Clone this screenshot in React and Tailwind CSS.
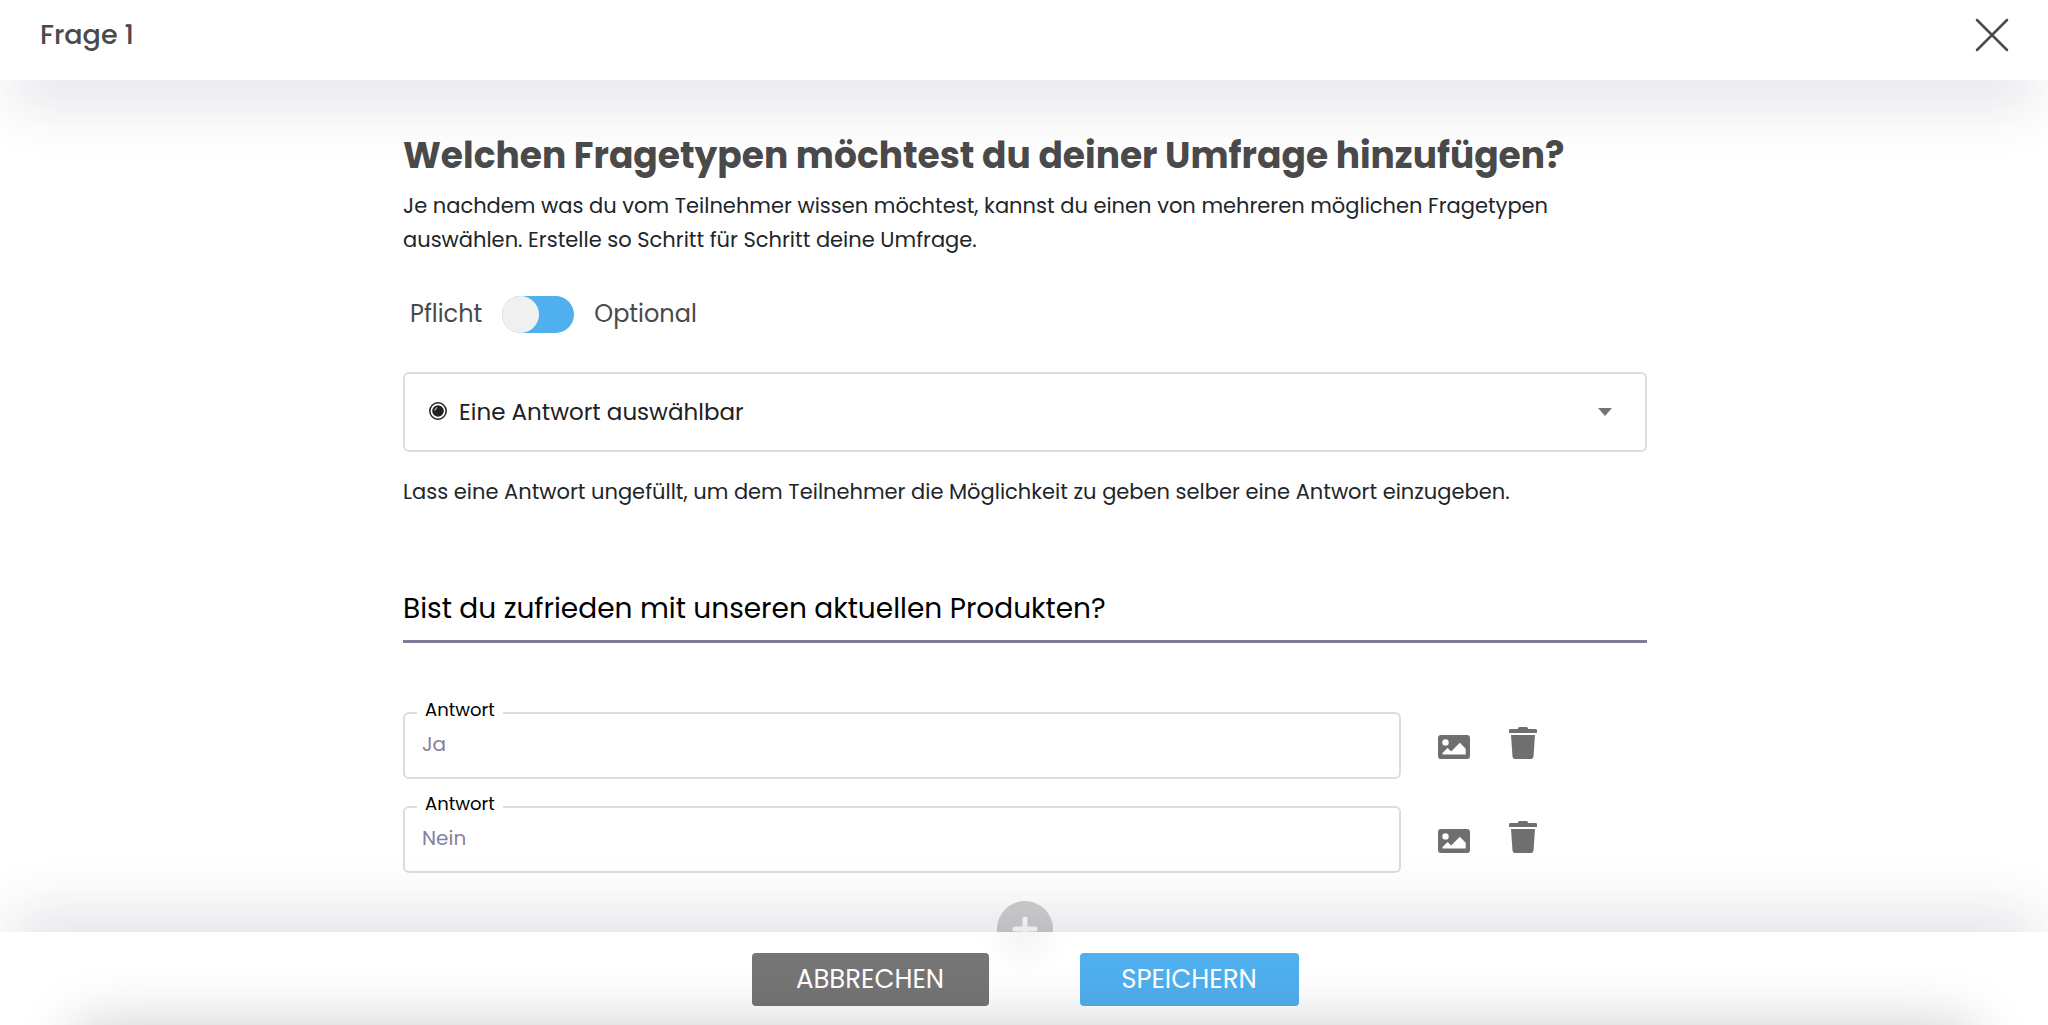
import React, { useState } from 'react';

const CloseIcon = () => (
  <svg width="34" height="34" viewBox="0 0 34 34" fill="none" stroke="#4a4a4a" strokeWidth="2.5" strokeLinecap="round">
    <path d="M2 2l30 30M32 2L2 32" />
  </svg>
);

const RadioIcon = () => (
  <svg width="18" height="20" viewBox="0 0 18 20" fill="none">
    <circle cx="9" cy="9" r="8.2" stroke="#222" strokeWidth="1.5" />
    <circle cx="9" cy="9" r="5.8" fill="#222" />
    <path d="M5.8 8a3.500 3.500 0 0 1 2-2.300" stroke="#fff" strokeWidth="1" strokeLinecap="round" />
  </svg>
);

const ImageIcon = () => (
  <svg width="34" height="26" viewBox="0 0 34 26" fill="#6f6f6f">
    <path
      fillRule="evenodd"
      d="M4 1h26a3 3 0 0 1 3 3v18a3 3 0 0 1-3 3H4a3 3 0 0 1-3-3V4a3 3 0 0 1 3-3zM8.500 5.200a3.200 3.200 0 1 0 0 6.400a3.200 3.200 0 0 0 0-6.400zM5.500 20.500h23.200v-5.800L22.800 8.800l-8.600 8.600l-3.600-3.400l-5.100 5z"
    />
  </svg>
);

const TrashIcon = () => (
  <svg width="28" height="32" viewBox="0 0 28 32" fill="#6f6f6f">
    <path d="M9 1.200Q9.300 0 11 0h6q1.700 0 2 1.200V2h7.500q1.500 0 1.500 1.300V6H0V3.300Q0 2 1.500 2H9z" />
    <path d="M2 8h24l-1.500 21.500Q24.300 32 22 32H6q-2.300 0-2.500-2.500z" />
  </svg>
);

const PlusIcon = () => (
  <svg width="26" height="26" viewBox="0 0 26 26" stroke="#fff" strokeWidth="5" strokeLinecap="round">
    <path d="M13 3v20M3 13h20" />
  </svg>
);

const Answer = ({ id, value, onChange }) => (
  <div className="flex items-center pr-[110px]">
    <div className="relative flex-1">
      <label htmlFor={id} className="absolute -top-[14px] left-[14px] bg-white px-2 text-[18px] leading-6 text-black">Antwort</label>
      <input
        id={id}
        value={value}
        onChange={onChange}
        className="block h-[67px] w-full rounded-md border-2 border-[#dcdcdc] bg-transparent px-[17px] pb-1 text-[20px] text-[#8580a0] outline-none"
      />
    </div>
    <button aria-label="Bild hinzufügen" className="ml-9 pt-[2px]"><ImageIcon /></button>
    <button aria-label="Antwort löschen" className="ml-[38px] pb-[6px]"><TrashIcon /></button>
  </div>
);

const App = () => {
  const [optional, setOptional] = useState(false);
  const [question, setQuestion] = useState('Bist du zufrieden mit unseren aktuellen Produkten?');
  const [answers, setAnswers] = useState(['Ja', 'Nein']);

  return (
    <div className="flex h-screen flex-col overflow-hidden bg-white font-['Poppins','Inter',sans-serif] text-[#212529]">
      <header className="relative z-10 flex h-20 shrink-0 items-start justify-between bg-white px-10 pt-[18px] shadow-[0_35px_60px_-12px_rgba(50,50,93,0.14)]">
        <h2 className="text-[27px] leading-[34px] font-medium text-[#4a4a4a]">Frage 1</h2>
        <button aria-label="Schließen" className="-mr-px"><CloseIcon /></button>
      </header>

      <main className="min-h-0 flex-1 overflow-hidden pr-6 pl-[26px]">
        <div className="mx-auto max-w-[1244px] pt-[51px]">
          <h1 className="text-[36px] leading-[50px] font-bold text-[#4a4a4a]">Welchen Fragetypen möchtest du deiner Umfrage hinzufügen?</h1>
          <p className="mt-2 max-w-[1190px] text-[21px] leading-[34px]">
            Je nachdem was du vom Teilnehmer wissen möchtest, kannst du einen von mehreren möglichen Fragetypen auswählen. Erstelle so Schritt für Schritt deine Umfrage.
          </p>

          <div className="mt-[38px] flex h-[38px] items-center gap-5 pl-[7px] text-[24px] text-[#4a4a4a]">
            <span>Pflicht</span>
            <label className="flex h-[37px] w-[72px] cursor-pointer rounded-full bg-[#50afee] has-checked:justify-end">
              <input
                type="checkbox"
                aria-label="Optional"
                checked={optional}
                onChange={(e) => setOptional(e.target.checked)}
                className="sr-only"
              />
              <span className="size-[37px] rounded-full bg-[#f0f0f0]" />
            </label>
            <span>Optional</span>
          </div>

          <div className="relative mt-[39px]">
            <select aria-label="Fragetyp" className="block h-20 w-full appearance-none rounded-md border-2 border-[#dadfe4] bg-white pr-16 pl-[54px] text-[23px] text-[#212121] outline-none">
              <option>Eine Antwort auswählbar</option>
            </select>
            <span className="pointer-events-none absolute inset-y-0 left-[26px] flex items-center"><RadioIcon /></span>
            <span className="pointer-events-none absolute inset-y-0 right-[35px] flex items-center">
              <svg width="14" height="8" viewBox="0 0 14 8" fill="#757575"><path d="M0 0h14L7 8z" /></svg>
            </span>
          </div>

          <p className="mt-[23px] text-[21px] leading-[34px]">Lass eine Antwort ungefüllt, um dem Teilnehmer die Möglichkeit zu geben selber eine Antwort einzugeben.</p>

          <input
            aria-label="Frage"
            value={question}
            onChange={(e) => setQuestion(e.target.value)}
            className="mt-[68px] block h-[66px] w-full border-b-3 border-[#7f7b98] text-[28px] text-black outline-none"
          />

          <div className="mt-[69px] flex flex-col gap-[27px]">
            {answers.map((a, i) => (
              <Answer
                key={i}
                id={`antwort-${i}`}
                value={a}
                onChange={(e) => setAnswers(answers.map((v, n) => (n === i ? e.target.value : v)))}
              />
            ))}
          </div>

          <button
            aria-label="Antwort hinzufügen"
            onClick={() => setAnswers([...answers, ''])}
            className="mx-auto mt-7 flex size-14 items-center justify-center rounded-full bg-[#cfcfcf]"
          >
            <PlusIcon />
          </button>
        </div>
      </main>

      <footer className="relative z-10 flex h-[93px] shrink-0 items-start justify-center gap-[91px] bg-white pt-[21px] pl-[2px] shadow-[0_-30px_60px_-12px_rgba(50,50,93,0.14)]">
        <div className="pointer-events-none absolute top-0 left-1/2 h-12 w-24 -translate-x-1/2 bg-[radial-gradient(circle_at_top,rgba(0,0,0,0.04),transparent_70%)]" />
        <button className="h-[53px] w-[237px] rounded bg-[#757575] text-[26px] text-white">ABBRECHEN</button>
        <button className="h-[53px] w-[219px] rounded bg-[#50afee] text-[26px] text-white">SPEICHERN</button>
        <div className="pointer-events-none absolute inset-x-[75px] top-full h-24 shadow-[0_0_60px_rgba(0,0,0,0.2)]" />
      </footer>
    </div>
  );
};

export default App;
